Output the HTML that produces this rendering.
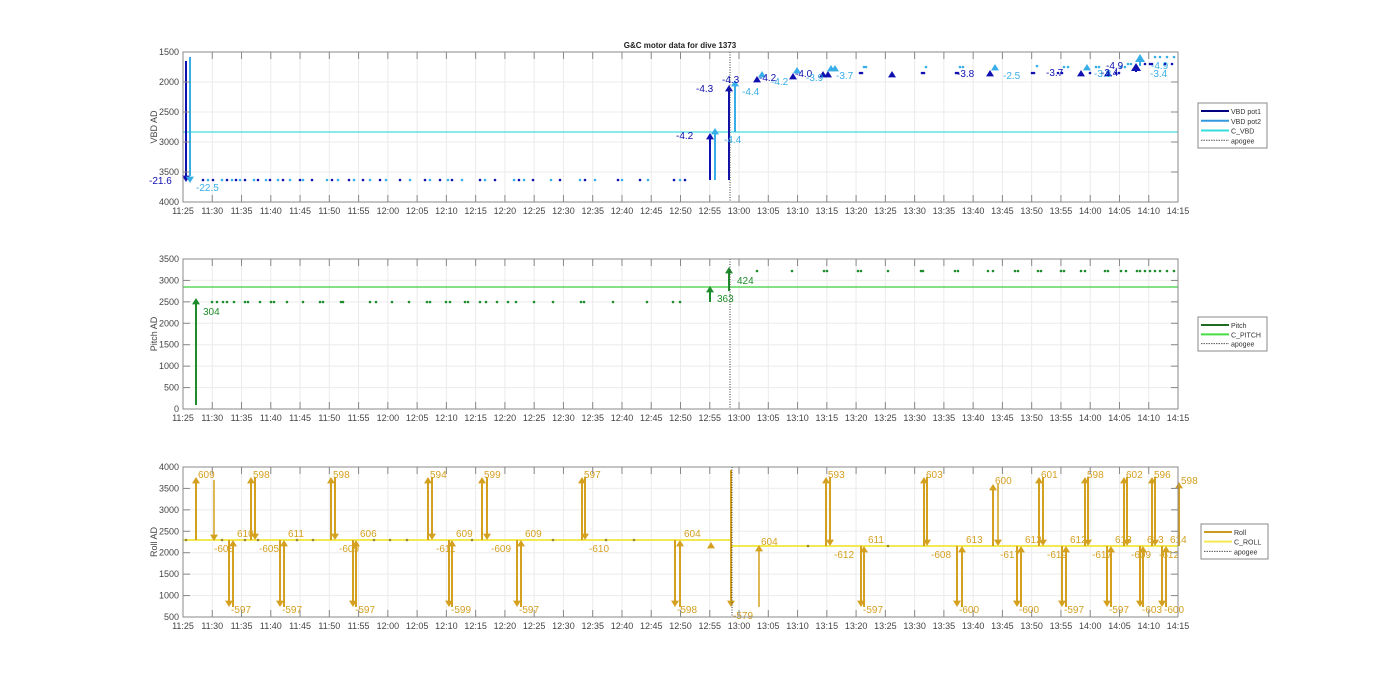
<!DOCTYPE html>
<html><head><meta charset="utf-8"><style>
html,body{margin:0;padding:0;background:#fff;width:1400px;height:693px;overflow:hidden}
svg{display:block;font-family:"Liberation Sans",sans-serif}
</style></head><body>
<svg id="s" width="1400" height="693" xmlns="http://www.w3.org/2000/svg"></svg>
<script>
var S=document.getElementById('s'),h='';
var X0=183,X1=1178;
function add(t){h+=t;}
function ln(x1,y1,x2,y2,c,w,d){add('<line x1="'+x1+'" y1="'+y1+'" x2="'+x2+'" y2="'+y2+'" stroke="'+c+'" stroke-width="'+(w||1)+'"'+(d?' stroke-dasharray="'+d+'"':'')+'/>');}
function tx(x,y,s,c,fs,a,b){add('<text x="'+x+'" y="'+y+'" fill="'+c+'" font-size="'+(fs||9)+'"'+(a?' text-anchor="'+a+'"':'')+(b?' font-weight="bold"':'')+'>'+s+'</text>');}
function tri(x,y,up,c,s){s=s||4;if(up)add('<polygon points="'+(x-s)+','+(y+s*1.6)+' '+(x+s)+','+(y+s*1.6)+' '+x+','+y+'" fill="'+c+'"/>');else add('<polygon points="'+(x-s)+','+(y-s*1.6)+' '+(x+s)+','+(y-s*1.6)+' '+x+','+y+'" fill="'+c+'"/>');}
function arr(x,y1,y2,c,w){ln(x,y1,x,y2+(y2<y1?5:-5),c,w||2);tri(x,y2,y2<y1,c,4);}
function dot(x,y,c){add('<circle cx="'+x+'" cy="'+y+'" r="1.3" fill="'+c+'"/>');}
var times=[];for(var m=0;m<=170;m+=5){var tot=11*60+25+m;var hh=Math.floor(tot/60),mm=tot%60;times.push(hh+':'+(mm<10?'0':'')+mm);}
function axes(top,bot,labels){
 var n=labels.length-1;
 for(var i=0;i<times.length;i++){var x=X0+i*(X1-X0)/34;ln(x,top,x,bot,'#ebebeb',1);}
 for(var j=0;j<=n;j++){var y=top+j*(bot-top)/n;ln(X0,y,X1,y,'#ebebeb',1);}
}
function frame(top,bot,labels,ylabel){
 var n=labels.length-1;
 add('<rect x="'+X0+'" y="'+top+'" width="'+(X1-X0)+'" height="'+(bot-top)+'" fill="none" stroke="#888" stroke-width="1"/>');
 for(var i=0;i<times.length;i++){var x=X0+i*(X1-X0)/34;ln(x,bot,x,bot-7,'#888');ln(x,top,x,top+7,'#888');tx(x,bot+12,times[i],'#444',9,'middle');}
 for(var j=0;j<=n;j++){var y=top+j*(bot-top)/n;ln(X0,y,X0+7,y,'#888');ln(X1,y,X1-7,y,'#888');tx(X0-4,y+3,labels[j],'#444',9,'end');}
 var cy=(top+bot)/2;add('<text x="0" y="0" font-size="9" fill="#444" text-anchor="middle" transform="translate(157,'+cy+') rotate(-90)">'+ylabel+'</text>');
}
function legend(x,y,w,hgt,items){
 add('<rect x="'+x+'" y="'+y+'" width="'+w+'" height="'+hgt+'" fill="#fff" stroke="#888"/>');
 for(var i=0;i<items.length;i++){var yy=y+7+i*(hgt-6)/items.length+1;
  ln(x+3,yy,x+31,yy,items[i][1],items[i][2]?1:2,items[i][2]?'1.5,1':null);tx(x+33,yy+3,items[i][0],'#333',7);}
}
tx(680,48,'G&amp;C motor data for dive 1373','#222',8,'middle',true);
var T1=52,B1=202;
axes(T1,B1,['1500','2000','2500','3000','3500','4000']);
var D='#1010b0',L='#38aee8',C='#44dde0';
ln(X0,132,X1,132,C,1.2);
var dx=[203,208,213,222,227,232,236,240,245,254,258,266,270,278,283,290,300,303,312,327,332,338,349,354,363,370,380,386,400,410,425,430,440,448,452,462,480,485,495,514,519,524,533,551,560,580,585,595,618,622,640,648,674,680,685];
dx.forEach(function(x,i){dot(x,180,i%2?L:D);});
ln(186,61,186,176,D,2);tri(186,182,false,D,4);
ln(190,57,190,176,L,2);tri(190,183,false,L,4);
tx(149,184,'-21.6',D,10);tx(196,191,'-22.5',L,10);
arr(710,180,133,D);arr(715,180,128,L);
arr(729,180,85,D);arr(735,132,80,L);
ln(730,52,730,202,'#333',1,'1,1.5');
tri(757,76,true,D);tri(762,71,true,L);
tri(793,73,true,D);tri(797,67,true,L);
tri(823,71,true,D);tri(828,71,true,D);tri(831,65,true,L);tri(835,65,true,L);
tri(892,71,true,D);tri(990,70,true,D);tri(995,64,true,L);tri(1081,70,true,D);tri(1087,64,true,L);tri(1108,70,true,D);
ln(1136,65,1136,72,D,2);tri(1136,63,true,D,5);ln(1140,62,1140,66,L,2);tri(1140,54,true,L,5);
[[860,73,D],[862,73,D],[864,67,L],[866,67,L],[922,73,D],[924,73,D],[926,67,L],[956,73,D],[958,73,D],[960,67,L],[963,67,L],[1034,73,D],[1037,66,L],[1058,73,D],[1062,73,D],[1064,67,L],[1068,67,L],[1090,73,D],[1096,67,L],[1099,67,L],[1116,73,D],[1119,73,D],[1121,67,L],[1125,67,L],[1145,64,D],[1150,64,D],[1155,57,L],[1160,57,L],[1165,64,D],[1167,57,L],[1172,64,D],[1174,57,L],[1032,73,D],[1128,64,L],[1131,64,L],[1152,64,D]].forEach(function(p){dot(p[0],p[1],p[2]);});
tx(676,139,'-4.2',D,10);tx(724,143,'-4.4',L,10);tx(696,92,'-4.3',D,10);tx(722,83,'-4.3',D,10);tx(742,95,'-4.4',L,10);
tx(759,81,'-4.2',D,10);tx(771,85,'-4.2',L,10);tx(795,77,'-4.0',D,10);tx(806,81,'-3.9',L,10);tx(836,79,'-3.7',L,10);
tx(957,77,'-3.8',D,10);tx(1003,79,'-2.5',L,10);tx(1046,76,'-3.7',D,10);tx(1094,77,'-3.8',L,10);tx(1101,76,'-3.4',D,10);
tx(1106,69,'-4.9',D,10);tx(1151,69,'-4.9',L,10);tx(1150,77,'-3.4',L,10);
frame(T1,B1,['1500','2000','2500','3000','3500','4000'],'VBD AD');
legend(1198,103,69,45,[['VBD pot1','#000080'],['VBD pot2','#3399dd'],['C_VBD','#33dddd'],['apogee','#555',1]]);
var T2=259,B2=409;
axes(T2,B2,['3500','3000','2500','2000','1500','1000','500','0']);
var G='#1e8c2a',GC='#3ccc3c';
ln(X0,287,X1,287,GC,1.2);
[212,217,223,227,234,245,248,260,271,274,287,303,320,323,341,343,370,376,392,409,427,430,446,450,465,468,480,486,497,508,516,534,553,581,584,613,647,673,680].forEach(function(x){dot(x,302,G);});
[757,792,824,827,858,861,888,921,923,955,958,988,993,1015,1018,1038,1041,1061,1064,1081,1085,1105,1108,1121,1126,1137,1140,1145,1150,1155,1160,1167,1174].forEach(function(x){dot(x,271,G);});
arr(196,405,298,G);arr(710,302,286,G);arr(729,291,267,G);
ln(730,259,730,409,'#333',1,'1,1.5');
tx(203,315,'304',G,10);tx(717,302,'363',G,10);tx(737,284,'424',G,10);
frame(T2,B2,['3500','3000','2500','2000','1500','1000','500','0'],'Pitch AD');
legend(1198,317,69,34,[['Pitch','#1e6b22'],['C_PITCH','#44dd44'],['apogee','#555',1]]);
var T3=467,B3=617;
axes(T3,B3,['4000','3500','3000','2500','2000','1500','1000','500']);
var R='#d4a020',RC='#f2ea50';
ln(X0,540,732,540,RC,2);ln(732,546,X1,546,RC,2);
[186,222,245,258,297,313,374,390,407,472,553,606,634,808,888].forEach(function(x){dot(x,x<732?540:546,'#998833');});
function hi(x1,x2,yl,a,b){arr(x1,yl,477,R);if(x2)arr(x2,477,yl,R);tx(x1+2,478,a,R,10);if(b)tx(x2+4,yl+12,b,R,10);}
function lo(x1,x2,yl,a,b){arr(x1,yl,607,R);arr(x2,607,yl,R);tx(x1+2,613,a,R,10);tx(x2+4,yl-3,b,R,10);}
arr(196,540,477,R);tx(198,478,'609',R,10);ln(214,480,214,535,R,1.5);tri(214,541,false,R,4);tx(214,552,'-608',R,10);
hi(251,255,540,'598','-605');hi(331,335,540,'598','-609');hi(428,432,540,'594','-611');hi(482,487,540,'599','-609');hi(582,585,540,'597','-610');
hi(826,830,546,'593','-612');hi(924,927,546,'603','-608');
arr(993,546,484,R);ln(998,484,998,540,R,1.5);tri(998,546,false,R,4);tx(995,484,'600',R,10);tx(1000,558,'-617',R,10);
hi(1039,1043,546,'601','-619');hi(1085,1088,546,'598','-617');hi(1124,1127,546,'602','-609');hi(1152,1155,546,'596','-612');
arr(1179,546,482,R);tx(1181,484,'598',R,10);
lo(229,233,540,'-597','610');lo(280,284,540,'-597','611');lo(353,356,540,'-597','606');lo(449,452,540,'-599','609');lo(517,521,540,'-597','609');lo(675,680,540,'-598','604');
tri(711,542,true,R,4);
arr(731,470,607,R);tx(733,619,'-579',R,10);ln(759,607,759,551,R,1.5);tri(759,545,true,R,4);tx(761,545,'604',R,10);
lo(861,864,546,'-597','611');lo(957,962,546,'-600','613');lo(1017,1021,546,'-600','612');lo(1062,1066,546,'-597','612');lo(1107,1111,546,'-597','613');lo(1140,1143,546,'-603','613');lo(1162,1166,546,'-600','614');
ln(732,467,732,617,'#333',1,'1,1.5');
frame(T3,B3,['4000','3500','3000','2500','2000','1500','1000','500'],'Roll AD');
legend(1201,524,67,35,[['Roll','#c99a1e'],['C_ROLL','#f2ea50'],['apogee','#555',1]]);
S.innerHTML=h;
</script>
</body></html>
